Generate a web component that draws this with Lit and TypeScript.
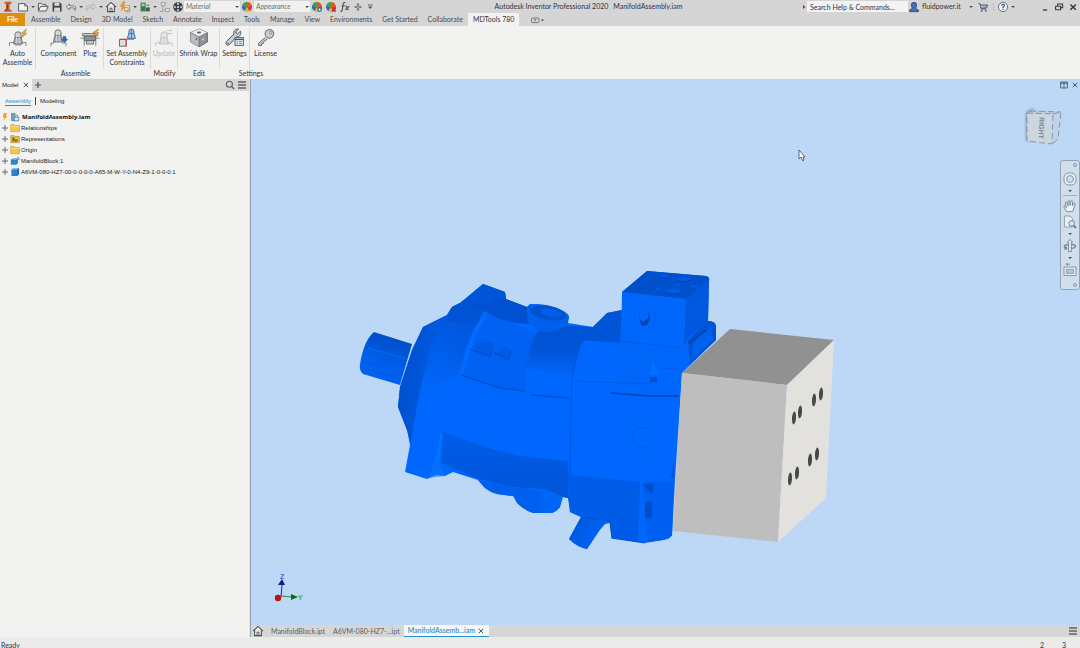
import { LitElement, html, css, svg, nothing, TemplateResult } from "lit";
import { customElement, property } from "lit/decorators.js";

/* Glyphs: [width, height, drawing] */
const plugShape = (x: number, y: number) => svg`<g transform="translate(${x} ${y})" stroke="#5d5f61" stroke-width=".8" stroke-linejoin="round">
  <path d="M3 3.2Q3.2 .8 6 .8Q8.8 .8 9 3.2V6.5H3Z" fill="#c9cbce"/>
  <path d="M3 6.5H9L10.4 11.5V13H1.6V11.5Z" fill="#a9acb0"/>
  <path d="M4.6 2V12.5M7.2 2V12.5" stroke="#e6e7e8" stroke-width=".7"/></g>`;
const wheel = svg`<circle cx="6" cy="6" r="4.9" fill="#e9b524"/>
  <path d="M6 6L1.4 4.2A4.9 4.9 0 0 1 6 1.1Z" fill="#3fa14c"/><path d="M6 6V1.1A4.9 4.9 0 0 1 10.7 4.6Z" fill="#e4572a"/>
  <path d="M6 6L10.7 4.6A4.9 4.9 0 0 1 8.6 10.2Z" fill="#d83a33"/><path d="M6 6L1.4 4.2A4.9 4.9 0 0 0 3.3 10.1Z" fill="#2f6fc1"/>`;
const wrench = svg`<path d="M17.4 3.2L14.6 5.8L13.2 5.2L12.9 3.8L15.6 1.2C13.6 .6 11.2 1.6 10.8 4.2Q10.7 5.2 11 6L3.4 13.6Q2 15.4 3.6 16.8Q5 18 6.6 16.4L13.6 8.6C16.4 9.4 18.6 6.2 17.4 3.2Z" fill="#c9ccd0" stroke="#54585d" stroke-width="1"/><circle cx="5" cy="15.2" r=".8" fill="#54585d"/>`;

const GLYPHS: Record<string, [number, number, TemplateResult]> = {
  logo: [10, 12, svg`<path d="M1.5 .8H8.5V2.6L6.6 3.4V8L8.8 9.6V10.8H1.2V9.6L3.4 8V3.4L1.5 2.6Z" fill="#c8622a"/><path d="M3.4 3.4H4.8V8.2L3.6 9.8H1.2L3.4 8Z" fill="#7a3613"/>`],
  new: [12, 12, svg`<path d="M1.6 2.6H7.6L10.4 5V10H1.6Z" fill="#f3f3f3" stroke="#5a5d60"/><path d="M7.6 2.6V5H10.4" fill="none" stroke="#5a5d60" stroke-width=".8"/>`],
  open: [12, 12, svg`<path d="M1.4 10V2.4H4.6L5.6 3.6H9V5.4" fill="#ececec" stroke="#5a5d60"/><path d="M1.4 10L3.6 5.4H11.2L9 10Z" fill="#f4f4f4" stroke="#5a5d60"/>`],
  save: [12, 12, svg`<path d="M1.6 1.6H9L10.6 3V10.6H1.6Z" fill="#3f4245"/><rect x="3.4" y="1.6" width="5" height="3.2" fill="#d9dadb"/><rect x="3.2" y="6.6" width="5.8" height="4" fill="#d9dadb"/>`],
  undo: [12, 12, svg`<path d="M4.4 3L1.4 5.8L4.4 8.6V6.8H8Q9.6 6.8 9.6 8.4V9.6Q11 8.6 10.8 7Q10.4 4.8 8 4.8H4.4Z" fill="#ededed" stroke="#5a5d60" stroke-width=".8"/>`],
  redo: [12, 12, svg`<path d="M7.6 3L10.6 5.8L7.6 8.6V6.8H4Q2.4 6.8 2.4 8.4V9.6Q1 8.6 1.2 7Q1.6 4.8 4 4.8H7.6Z" fill="#dcdcdc" stroke="#a9abad" stroke-width=".8"/>`],
  home: [12, 12, svg`<path d="M1 6.2L6 1.4L11 6.2M2.6 5.4V10.6H9.4V5.4" fill="#f1f1f1" stroke="#4d5053" stroke-width="1.1"/><path d="M5 10.4V7.2H7V10.4" fill="none" stroke="#4d5053" stroke-width=".9"/>`],
  bolt: [12, 12, svg`<path d="M4 .8L1.4 5.4H3.4L2.4 9.6L6.4 4.2H4.2L6 .8Z" fill="#f39a1f" stroke="#c97508" stroke-width=".4"/><path d="M5.4 6.6H9.2V9.6H5.4ZM8 4.6H10.6V10.8H6.6" fill="#ededed" stroke="#c4792c" stroke-width=".8"/>`],
  part: [12, 12, svg`<path d="M1.6 1.6H6.6V10.4H1.6Z" fill="#33804c"/><path d="M2.6 2.6H5.6V5.2H2.6Z" fill="#a9cfb3"/><path d="M6.8 6.4H10.8V10.4H6.8Z" fill="#4a5b50"/><path d="M8 3.6L9 5L10 3.6" stroke="#33804c" fill="none"/>`],
  tree: [12, 12, svg`<path d="M2.4 1.6H6V4.8H2.4ZM6.4 7.4H10.4V10.4H6.4ZM4 4.8V9H6.4" fill="#e9e9e9" stroke="#8a8d90" stroke-width=".8"/><path d="M1.4 10.4H4" stroke="#8a8d90"/>`],
  reel: [12, 12, svg`<circle cx="6" cy="6" r="4.8" fill="#3d4043"/><circle cx="6" cy="6" r="1.1" fill="#e4e4e4"/><g fill="#c9cacc"><circle cx="6" cy="2.9" r="1.1"/><circle cx="6" cy="9.1" r="1.1"/><circle cx="2.9" cy="6" r="1.1"/><circle cx="9.1" cy="6" r="1.1"/></g>`],
  wheel: [12, 12, wheel],
  wheelBlue: [12, 12, svg`${wheel}<circle cx="8.6" cy="8.6" r="2.3" fill="#2b62a8"/><path d="M8.6 7.2V10M7.2 8.6H10" stroke="#fff" stroke-width=".7"/>`],
  wheelRed: [12, 12, svg`${wheel}<path d="M7 7L10.6 10.6M10.6 7L7 10.6" stroke="#c92a2a" stroke-width="1.6"/>`],
  fx: [12, 12, svg`<path d="M6.4 1.6Q4.6 1 4.2 3.4L3.2 9Q2.8 10.8 1.4 10.4M2.6 5H5.8M6.4 5.2Q7.6 4.6 8 6.6Q8.4 9 9.8 8.4M10.4 5.2L6.2 8.8" fill="none" stroke="#4a4d50" stroke-width="1.1"/>`],
  plus: [12, 12, svg`<path d="M6 2.6V9.4M2.6 6H9.4" stroke="#6c6f72" stroke-width="2.2"/><path d="M6 3.4V8.6M3.4 6H8.6" stroke="#c5c6c7" stroke-width=".7"/>`],
  menu: [8, 12, svg`<path d="M2 4H6.6" stroke="#55585b" stroke-width=".9"/><path d="M2 5.6H6.6L4.3 8Z" fill="#55585b"/>`],
  caret: [6, 12, svg`<path d="M1.2 5H5L3.1 7.1Z" fill="#4d5053"/>`],
  play: [6, 12, svg`<path d="M2 4L4.4 6L2 8Z" fill="#45484b"/>`],
  user: [12, 12, svg`<path d="M3.4 4.2Q3.2 1.4 6 1.4Q8.8 1.4 8.6 4.2Q8.4 6.6 7.4 7.2L10.4 9V10.6H1.6V9L4.6 7.2Q3.6 6.6 3.4 4.2Z" fill="#4570b5" stroke="#1c3c74" stroke-width=".8"/>`],
  cart: [12, 12, svg`<path d="M1.4 2.6H3L4.2 8H9.4M3.4 4H10.6L9.6 7H4" fill="#9fb0c8" stroke="#44516a" stroke-width=".9"/><circle cx="4.8" cy="9.8" r=".9" fill="#44516a"/><circle cx="8.8" cy="9.8" r=".9" fill="#44516a"/>`],
  help: [12, 12, svg`<circle cx="6" cy="6" r="4.6" fill="#f3f5f8" stroke="#49535f" stroke-width=".8"/><path d="M4.6 4.8Q4.6 3.4 6 3.4Q7.5 3.4 7.4 4.7Q7.3 5.6 6 6.2V7.2M6 8V9" fill="none" stroke="#2c4b8c" stroke-width="1.1"/>`],
  min: [12, 12, svg`<path d="M3.8 9H8.2" stroke="#333" stroke-width="1.2"/>`],
  restore: [12, 12, svg`<path d="M4.6 5V3H9.6V6.6H8M2.6 5.2H7.6V8.8H2.6Z" fill="none" stroke="#3c3c3c" stroke-width="1.1"/>`],
  close: [12, 12, svg`<path d="M3.4 3.4L8.8 8.8M8.8 3.4L3.4 8.8" stroke="#333" stroke-width="1.4"/>`],
  x: [8, 8, svg`<path d="M1.8 1.8L6.2 6.2M6.2 1.8L1.8 6.2" stroke="#55585b" stroke-width="1"/>`],
  add: [8, 8, svg`<path d="M4 1V7M1 4H7" stroke="#4d4f52" stroke-width="1.2"/>`],
  search: [10, 10, svg`<circle cx="4.4" cy="4.2" r="3" fill="none" stroke="#5b5e61" stroke-width="1.1"/><path d="M6.6 6.4L9 9" stroke="#5b5e61" stroke-width="1.3"/>`],
  burger: [10, 10, svg`<path d="M1 2H9M1 5H9M1 8H9" stroke="#606366" stroke-width="1.4"/>`],
  tile: [10, 10, svg`<path d="M1.6 2H8.4V8H1.6ZM5 2V8M1.6 3.4H8.4" fill="none" stroke="#4d5a69" stroke-width=".9"/>`],
  panel: [16, 10, svg`<rect x="1.5" y="3" width="7.6" height="4.6" rx="1.4" fill="none" stroke="#5b5e61" stroke-width=".8"/><path d="M4 4.6H6.6L5.3 6Z" fill="#45484b"/><path d="M11 4.6H14L12.5 6.4Z" fill="#45484b"/>`],

  autoAssemble: [24, 20, svg`${plugShape(6, 3)}<path d="M3.5 18V14.6H7.6M20 18V14.6H16.6M9 17H15" fill="none" stroke="#6b6e71" stroke-width=".8"/><path d="M20.6 1L15.4 5.4L17.8 6L15 10L20.8 5.4L18.6 4.8Z" fill="#f5b73b" stroke="#a46d12" stroke-width=".6"/>`],
  component: [24, 20, svg`${plugShape(5, 1)}<path d="M4 18.4V15H7.4M19 18.4V15H15" fill="none" stroke="#6b6e71" stroke-width=".8"/><path d="M16 8.4H19V11.2H20.8L17.5 14.8L14.2 11.2H16Z" fill="#2a6db3" stroke="#1a4e88" stroke-width=".4"/>`],
  plug: [24, 20, svg`<path d="M4.6 5.6H19.4V8H4.6Z" fill="#d6d8da" stroke="#55585b" stroke-width=".8"/><path d="M6.4 8H17.6V12.6H6.4Z" fill="#8e9297" stroke="#55585b" stroke-width=".8"/><path d="M8.4 12.6H15.6V16H8.4Z" fill="#c7c9cc" stroke="#55585b" stroke-width=".8"/><path d="M2.4 10.2H6.2V17.8M21.6 10.2H17.8V17.8" fill="none" stroke="#6b6e71" stroke-width=".8"/><path d="M20.8 1L15 4.4L17.4 5L15 8.4L20.8 4.8L18.6 4.2Z" fill="#f5b73b" stroke="#a46d12" stroke-width=".6"/>`],
  constraints: [24, 20, svg`<path d="M4.5 11.5H11.2V18.2H4.5Z" fill="#dcdfe2" stroke="#5d6064" stroke-width=".9"/><path d="M4.5 11.2H11.2V18.4M11.2 11.2H19" fill="none" stroke="#d03a32" stroke-width=".9"/><path d="M13.8 3.6Q14 1 16.4 1Q18.8 1 19 3.6V5.6L20.4 10.4H12.4L13.8 5.6Z" fill="#a9cbe8" stroke="#2e6596" stroke-width=".9"/><path d="M13.8 5.6H19M16.4 1.4V10" stroke="#2e6596" stroke-width=".8"/>`],
  update: [24, 20, svg`<g opacity=".38">${plugShape(6, 3)}<path d="M3.5 18V15H7.6M20 18V15H16.6M14.4 2.6H20L18.4 1M20.6 5.4H15L16.6 7" fill="none" stroke="#6b6e71" stroke-width=".9"/></g>`],
  shrink: [24, 20, svg`<path d="M12 1L20.4 4.6V14L12 18.8L3.6 14V4.6Z" fill="#8e939a" stroke="#54585e" stroke-width=".8"/><path d="M12 1L20.4 4.6L12 9L3.6 4.6Z" fill="#e9eaec"/><path d="M3.6 4.6L12 9V18.8L3.6 14Z" fill="#b9bdc3"/><path d="M3.6 4.6L12 9L20.4 4.6M12 9V18.8" fill="none" stroke="#54585e" stroke-width=".6"/><ellipse cx="12" cy="4.6" rx="2" ry="1" fill="#5a5e64"/><circle cx="9.4" cy="11" r=".9" fill="#5a5e64"/><circle cx="16" cy="11.4" r="1" fill="#d7d9dc"/>`],
  settings: [24, 20, svg`${wrench}<rect x="12" y="9.6" width="8.4" height="7.8" fill="#e8f1f8" stroke="#2f5d80" stroke-width=".9"/><path d="M12 11.4H20.4" stroke="#2f5d80" stroke-width="1.4"/><path d="M13.6 13.6H15M16 13.6H19M13.6 15.6H15M16 15.6H19" stroke="#2f5d80" stroke-width=".7"/>`],
  license: [24, 20, svg`<path d="M11.4 9.4L4.6 15.2V17.6L7.4 17.4L7.6 15.8L9.2 15.6L9.4 14L13.4 11" fill="#c2c5c9" stroke="#5b5e62" stroke-width=".9"/><path d="M11 5.4Q11.4 1.8 15.4 1.4Q19.8 1.8 19.8 5.8Q19.4 9.6 15.8 10.4Q11.4 10.2 11 5.4Z" fill="#c9ccd0" stroke="#5b5e62" stroke-width=".9"/><circle cx="16.6" cy="4.6" r="1.2" fill="#f4f4f4" stroke="#5b5e62" stroke-width=".7"/>`],

  assembly: [10, 10, svg`<path d="M1.6 1.6H5V8.6H1.6Z" fill="#7fa6c7" stroke="#3d6c93" stroke-width=".7"/><path d="M4.2 5.2H8.8V8.8H4.2Z" fill="#dde9f2" stroke="#3d6c93" stroke-width=".7"/><path d="M5.6 3H7.4V5" fill="none" stroke="#3d6c93" stroke-width=".7"/>`],
  spark: [6, 10, svg`<path d="M1.6 1H5L4 4H5.2L1.6 9L2.4 5.4H1Z" fill="#f49b22"/>`],
  folder: [10, 10, svg`<path d="M.8 1.6H4L5 2.6H9.4V8.6H.8Z" fill="#f3c650" stroke="#d49f27" stroke-width=".7"/><path d="M1.2 3.6H9" stroke="#fbe39c" stroke-width=".8"/>`],
  folderRep: [10, 10, svg`<path d="M.8 1.6H4L5 2.6H9.4V8.6H.8Z" fill="#e9bb45" stroke="#c09022" stroke-width=".7"/><path d="M2.4 3.4H4.6V7.6H2.4ZM5 5.4H7.6V7.6H5Z" fill="#6b6238"/>`],
  blockAsm: [10, 10, svg`<path d="M.8 3.6L3 2.4H8V7L6.4 8.8H.8Z" fill="#2f87c9"/><path d="M.8 3.6L3 2.4H8L6.2 3.8Z" fill="#83bde6"/><path d="M7.2 1L9.4 2.6L8.4 4" fill="none" stroke="#555" stroke-width=".8"/>`],
  block: [10, 10, svg`<path d="M1.4 2.6L3.4 1.2H9V7L7.4 9H1.4Z" fill="#2b7fd0"/><path d="M1.4 2.6L3.4 1.2H9L7.4 2.6Z" fill="#8cc3ee"/><path d="M7.4 2.6L9 1.2V7L7.4 9Z" fill="#1a5fa8"/>`],
  expand: [6, 8, svg`<path d="M3 1V7M0 4H6" stroke="#66686a" stroke-width="1"/>`],

  navWheel: [16, 16, svg`<rect x="2" y="2" width="12" height="12" rx="4.6" fill="#e4ecf3" stroke="#8795a1"/><circle cx="8" cy="8" r="3.4" fill="#d3e0eb" stroke="#8795a1"/>`],
  hand: [16, 16, svg`<path d="M4.6 13.6L2 9Q1.4 7.6 2.8 7.8L4.4 9.6L3.4 4.8Q3.6 3.4 4.8 4.4L6 7.8L6 2.8Q6.6 1.6 7.6 2.8L8 7.4L9.2 3Q10.2 2 10.8 3.4L10.2 8L12 5.2Q13.2 4.6 13.2 6L11.6 11L10.6 13.6Z" fill="#eef3f7" stroke="#76838f" stroke-width=".9"/>`],
  zoom: [16, 16, svg`<path d="M2.4 2H8L10.6 4.6V13H2.4Z" fill="#e9eff5" stroke="#8795a1" stroke-width=".9"/><circle cx="9.6" cy="9.4" r="2.8" fill="#d9e6f1" stroke="#76838f"/><path d="M11.8 11.6L14 14" stroke="#5f6c78" stroke-width="1.6"/>`],
  orbit: [16, 16, svg`<path d="M4.4 10.4Q1 9 3 7.2Q8 5.4 13 7.2Q15 8.8 11 10.2L8.8 10.4M4 8.6L4.8 10.6L2.4 11.4" fill="none" stroke="#76838f" stroke-width="1.3"/><path d="M6.6 13.6V4.4H5.4L8 1.4L10.6 4.4H9.4V13.6Z" fill="#e6edf3" stroke="#76838f" stroke-width=".9"/>`],
  lookAt: [16, 16, svg`<path d="M2 5H14V13.6H2Z" fill="#e4ecf3" stroke="#8795a1"/><path d="M4.4 7.4H11.6V11.4H4.4Z" fill="#b7c3ce" stroke="#8795a1" stroke-width=".8"/><path d="M8 2.2H4L5.4 1M4 2.2L5.4 3.6" fill="none" stroke="#76838f" stroke-width=".9"/>`],
};

@customElement("ui-icon")
class UiIcon extends LitElement {
  @property() name = "";
  static styles = css`
    :host { display: inline-flex; flex: none; }
    svg { display: block; }
  `;
  render() {
    const g = GLYPHS[this.name];
    return g ? html`<svg width=${g[0]} height=${g[1]} viewBox="0 0 ${g[0]} ${g[1]}" aria-hidden="true">${g[2]}</svg>` : nothing;
  }
}

/* The 3D scene: pump in blue, manifold block in grey */
@customElement("model-scene")
class ModelScene extends LitElement {
  static styles = css`
    :host { display: block; min-height: 0; }
    svg { display: block; width: 100%; height: 100%; }
    .axis { font: 700 7px "Liberation Sans", sans-serif; }
  `;
  render() {
    const holes = [[794, 418], [800, 412], [814, 400], [821, 394], [790, 479], [797, 473], [810, 460], [817, 454]];
    return html`<svg viewBox="251 79 829 546" role="img" aria-label="Pump mounted on manifold block">
      <defs>
        <linearGradient id="shaft" x1="0" y1="0" x2="-.3" y2="1"><stop offset="0" stop-color="#0050cc"/><stop offset=".45" stop-color="#0060ee"/><stop offset="1" stop-color="#0062f2"/></linearGradient>
        <linearGradient id="flange" x1="0" y1="0" x2="1" y2=".3"><stop offset="0" stop-color="#004ec8"/><stop offset="1" stop-color="#005de6"/></linearGradient>
        <linearGradient id="barrel" x1="0" y1="0" x2="0" y2="1"><stop offset="0" stop-color="#0052d2"/><stop offset=".5" stop-color="#0054d6"/><stop offset="1" stop-color="#0065fa"/></linearGradient>
        <linearGradient id="under" x1="0" y1="0" x2="0" y2="1"><stop offset="0" stop-color="#005de9"/><stop offset="1" stop-color="#0054d6"/></linearGradient>
        <linearGradient id="pipe" x1="0" y1="0" x2="1" y2=".5"><stop offset="0" stop-color="#0055d8"/><stop offset="1" stop-color="#0066fb"/></linearGradient>
        <linearGradient id="cover" x1="0" y1="0" x2="-.3" y2="1"><stop offset="0" stop-color="#0057dc"/><stop offset="1" stop-color="#0067fe"/></linearGradient>
      </defs>
      <path fill="url(#shaft)" d="M374 332L412 344L400 385L363 374Q359 371 360 364Q364 340 374 332Z"/>
      <path stroke="#0074ff" stroke-width=".8" fill="none" d="M368 348L407 359"/>
      <path stroke="#0056d8" stroke-width=".8" fill="none" d="M362 361L402 373M363 368L400 379"/>
      <path fill="#0067fe" d="M398 407L400 387L412 350L423 327L447 315L452 307L460 303L465 299L483 284L505 292L506 299L527 307L530 304Q545 304 556 308Q567 312 569 316L568 323L593 327L600 320L607 313L622 310V292L647 271L706 276Q710 277 709 281L708 321Q716 321 716 327V340L682 373L675 480L672 535Q670 539 663 540L645 543L612 538L610 523L605 524L599 531L587 549Q577 547 569 539L581 517L570 512L568 498L563 497L560 507Q556 512 552 513H533Q524 510 517 503L513 496L497 494Q490 492 485 488L478 480L453 472L445 476L436 475L427 479L405 472L410 445L407 430Z"/>
      <path fill="url(#flange)" d="M398 407L400 387L412 350L423 327L447 315L442 325Q430 350 424 375Q416 405 411 444L407 430Z"/>
      <path fill="url(#cover)" d="M447 315L452 307L460 303L484 312Q470 328 459 374L424 390Q424 350 447 315Z"/>
      <path fill="#0053d4" d="M452 307L460 303L484 311L477 325Q462 324 447 321Z"/>
      <path fill="#0051cf" d="M460 303L465 299L483 284L505 292L506 299L527 307L528 319L538 324Q505 325 484 311Z"/>
      <path fill="#005be6" d="M483 284L505 292L506 299L497 297L489 304L463 303Z" opacity=".4"/>
      <path fill="#0060ec" d="M527 307Q530 303 546 305Q565 309 569 317L567 327Q553 334 538 331L528 322Z"/>
      <ellipse cx="548" cy="313" rx="18" ry="7" transform="rotate(10 548 313)" fill="#0051cf"/>
      <ellipse cx="551" cy="313" rx="11" ry="4" transform="rotate(12 551 313)" fill="#005de8"/>
      <path fill="url(#barrel)" d="M538 331Q553 334 567 326L593 327L600 320L581 345L573 375L525 368Q527 345 538 331Z"/>
      <path fill="#0070ff" opacity=".5" d="M484 311Q472 330 460 374L463 375Q476 330 488 312Z"/>
      <path fill="#0060ed" d="M488 314L536 333L526 369L524 391L505 389L463 374Q472 340 488 314Z" opacity=".7"/>
      <path fill="none" stroke="#004ec8" stroke-width="1.6" d="M470 349L490 356L493 344M495 353L508 359L511 351"/>
      <path fill="#005be4" d="M472 347L483 340L494 343L490 355ZM496 352L505 347L511 351L508 359Z"/>
      <path fill="none" stroke="#0050cc" stroke-width="1.5" d="M461 375L500 388L525 391M531 395L570 398"/>
      <path fill="none" stroke="#0054d6" stroke-width="1" d="M580 342L572 375L569 500"/>
      <path fill="#0054d6" d="M581 342L593 327L607 313L622 310L620 343L581 340Z"/>
      <path fill="#0061f1" d="M620 341L688 348L680 364L676 368L655 366L652 392L620 392Z" opacity=".35"/>
      <path fill="#004fcb" d="M622 292L647 271L706 276Q710 277 709 281L686 299Z"/>
      <path fill="#0067fd" d="M622 293L686 299L683 348L621 341Z"/>
      <path fill="#0058de" d="M686 299L709 279L708 321L688 338L684 347Z"/>
      <g fill="#005be6"><ellipse cx="664" cy="276" rx="4" ry="1.5"/><ellipse cx="684" cy="279" rx="6" ry="2"/><ellipse cx="694" cy="286" rx="4" ry="1.5"/><ellipse cx="673" cy="291" rx="8" ry="2.5"/><ellipse cx="658" cy="289" rx="2" ry="1.5"/><ellipse cx="678" cy="285" rx="3" ry="1"/></g>
      <g fill="none" stroke="#003fa8" stroke-width=".8"><path d="M666 293Q674 296 682 292M678 281Q685 283 691 280M660 278H668"/></g>
      <path fill="#0045b5" d="M639 319L643 322L648 318L649 310L650 319L647 325L642 326Z"/>
      <ellipse cx="645" cy="317" rx="11" ry="14" fill="none" stroke="#0060ee" stroke-width=".8"/>
      <path fill="#0053d2" d="M688 340L708 321Q716 321 716 327V340L690 364Z"/>
      <path fill="#0065f8" d="M693 343L711 327L713 340L692 360Z" opacity=".7"/>
      <path stroke="#0044b4" stroke-width="1.6" fill="none" d="M689 343L706 330M611 393L650 396L679 396"/>
      <path stroke="#005ce6" stroke-width="1" fill="none" d="M621 341L683 348M575 381L650 384M656 368L679 369"/>
      <path fill="#0050cc" d="M650 377H657V382H650Z"/><path fill="#0070ff" d="M653 361L657 368V375H649Z"/>
      <path fill="url(#under)" d="M443 432L495 450L520 456L568 461V498L563 497L545 489L513 487L480 479L441 463Z"/>
      <path fill="#0b78ff" d="M440 433L443 434L439 463L445 476L428 478Q438 455 440 433Z" opacity=".6"/>
      <path fill="#0060ee" d="M478 480L513 487V496L497 494Q490 492 485 488ZM513 488Q535 488 560 497V507Q556 512 552 513H533Q524 510 517 503Z"/>
      <path fill="#0068fb" d="M540 491L562 497L560 507Q556 512 552 513H540Z" opacity=".5"/>
      <path fill="#005ce6" d="M568 475L640 482L638 542L612 538L610 523L581 517L570 512Z"/>
      <path fill="url(#pipe)" d="M581 517L609 521L605 524Q600 528 599 531L587 549Q577 547 569 539Z"/>
      <path fill="none" stroke="#0051cd" stroke-width="1.2" d="M582 517L610 521L612 538L645 543"/>
      <path fill="#005ff0" d="M642 482H674L672 535Q670 539 663 540L648 542Z"/>
      <path fill="#004ec8" d="M643 484L650 493H653V484M645 504Q653 496 652 508V518H645Z"/><path fill="#0051d0" d="M674 462L671 478H674Z"/>
      <path fill="none" stroke="#005ce8" d="M643 428A10 10 0 1 0 652 440M639 428H647M641 438L646 441"/>

      <path fill="#919191" d="M682 373L730 329L834 340L787 385Z"/>
      <path fill="#bebebe" d="M682 373L787 385L778 542L673 531Z"/>
      <path fill="#e3e1de" d="M787 385L834 340L826 498L778 542Z"/>
      <g fill="#484848">${holes.map(([x, y]) => svg`<ellipse cx=${x} cy=${y} rx="2" ry="6.4" transform="rotate(4 ${x} ${y})"/>`)}</g>

      <path d="M281 597L282 585" stroke="#22228c" stroke-width="1"/><path d="M278 585L282 579L285 585Z" fill="#16168f"/>
      <path d="M281 596L292 597" stroke="#2f7f58" stroke-width="1"/><path d="M291 594L298 597L291 600Z" fill="#087008"/>
      <circle cx="278" cy="598" r="3.2" fill="#b81212"/>
      <text class="axis" x="280" y="579" fill="#5b5bd2">Z</text><text class="axis" x="298" y="600" fill="#38b24e">Y</text>
      <path d="M799 150V159L801 157L803 161L804 160L803 157H805Z" fill="#fff" stroke="#3a4554" stroke-width=".8"/>
    </svg>`;
  }
}

@customElement("view-cube")
class ViewCube extends LitElement {
  static styles = css`
    :host { display: block; }
    svg { display: block; }
    .face { font: 700 7px "Liberation Sans", sans-serif; }
  `;
  render() {
    return html`<svg width="42" height="44" viewBox="0 0 42 44" role="img" aria-label="View cube">
      <defs><filter id="soft" x="-1" y="-.3" width="3" height="1.6"><feGaussianBlur stdDeviation="1.8"/></filter></defs>
      <path d="M4 7L12 3L10 36L4 35Z" fill="#6f87a3" opacity=".8" filter="url(#soft)"/>
      <path d="M5 8L31 9L30 39L5 36Z" fill="#cbd6e1"/><path d="M31 9L39 8L36 33L30 39Z" fill="#c0d3e8"/><path d="M5 8L12 5L39 7L31 9Z" fill="#bccbdc"/>
      <path d="M5 8L31 9L30 39L5 36ZM31 9L39 7L36 34L30 39M8 6L39 7" fill="none" stroke="#75879a" stroke-dasharray="6 3" stroke-width=".8"/>
      <text class="face" x="-11" y="0" transform="translate(17 23) rotate(92)" fill="#7b8794">RIGHT</text>
    </svg>`;
  }
}

@customElement("app-root")
class AppRoot extends LitElement {
  static styles = css`
    :host { display: flex; flex-direction: column; height: 100vh; overflow: hidden; background: #f2f2f1; color: #333436; font: 7px/9px Lato, "Liberation Sans", sans-serif; }
    * { box-sizing: border-box; }
    button, select, input { font: inherit; color: inherit; border: 0; padding: 0; margin: 0; background: none; border-radius: 0; }
    button { display: flex; align-items: center; justify-content: center; white-space: nowrap; }

    .titlebar { display: flex; align-items: center; height: 13px; flex: none; background: #d5d5d5; }
    .group { display: flex; align-items: center; flex: none; }
    .cell { width: 14px; height: 12px; }
    .logo { width: 16px; }
    .narrow { width: 6px; height: 12px; }
    .wide { width: 12px; height: 12px; }
    .combo { position: relative; display: flex; width: 56px; height: 11px; background: #f0f0f0; }
    .combo select { flex: 1; width: 100%; appearance: none; padding: 0 2px; font-style: italic; color: #6f7072; }
    .combo ui-icon { position: absolute; right: 0; top: 0; pointer-events: none; }
    .title { flex: 1; display: flex; justify-content: center; gap: 5px; margin: 0; font: inherit; white-space: nowrap; }
    .query { width: 101px; height: 11px; padding: 0 3px; background: #f3f3f3; }
    .query::placeholder { color: #333436; opacity: 1; }
    .account { display: flex; align-items: center; gap: 2px; width: 60px; justify-content: flex-start; }
    .split { width: 1px; height: 8px; margin: 0 2px 0 3px; background: #bdbdbd; }
    .store { margin-left: 2px; }
    .window { margin-left: 23px; gap: 2px; padding-right: 1px; }

    .tabs { display: flex; height: 13px; flex: none; background: #d5d5d5; }
    .tabs button { padding: 0 5px; color: #4a4c4e; }
    .tabs .file { width: 25px; padding: 0; margin-right: 1px; background: #e08e0b; color: #fff; font-weight: 700; }
    .tabs .active { background: #f2f2f1; color: #333436; }
    .tabs .toggle { margin-left: 6px; }

    .ribbon { display: flex; height: 53px; flex: none; background: #f2f2f1; }
    .panel { display: flex; flex-direction: column; padding-top: 2px; }
    .tools { display: flex; height: 41px; }
    .tools button { flex-direction: column; justify-content: flex-start; gap: 1px; height: 41px; line-height: 9px; border-right: 1px solid transparent; }
    .tools .end { border-right-color: #d9d9d8; }
    .tools .off { color: #b9babb; }
    .tools .w36 { width: 36px; }
    .tools .w46 { width: 46px; }
    .tools .w22 { width: 22px; padding-right: 5px; }
    .tools .w47 { width: 47px; }
    .tools .w27 { width: 27px; }
    .tools .w42 { width: 42px; }
    .tools .w30 { width: 30px; }
    .tools .w32 { width: 32px; }
    .caption { text-align: center; line-height: 9px; }

    .main { display: flex; flex: 1; min-height: 0; }
    .browser { width: 250px; flex: none; display: flex; flex-direction: column; font: 6px/8px "Liberation Sans", sans-serif; color: #222; border-right: 1px solid #e4e4e4; }
    .strip { display: flex; align-items: center; height: 12px; background: #d6d6d5; }
    .strip .tab { gap: 4px; height: 12px; padding: 0 2px; background: #f2f2f1; }
    .strip .add { padding: 0 2px; }
    .strip .push { margin-left: auto; }
    .strip .last { padding: 0 2px; }
    .modes { display: flex; align-items: center; gap: 4px; padding: 5px 5px 4px; }
    .modes button { height: 10px; border-bottom: 1px solid transparent; }
    .modes .on { color: #1f8fc4; border-bottom-color: #1f8fc4; }
    .modes .bar { width: 1px; height: 8px; background: #444; }
    .tree { list-style: none; margin: 0; padding: 1px 2px; }
    .tree li { display: flex; align-items: center; gap: 2px; height: 11px; white-space: nowrap; }
    .tree .root { font: 700 6px/8px "Open Sans", sans-serif; color: #111; }
    .tree .name { margin-left: -1px; }
    .tree .knob { width: 6px; height: 8px; }

    .stage { flex: 1; min-width: 0; display: flex; flex-direction: column; border-left: 1px solid #9aa3ad; }
    .canvas { position: relative; flex: 1; min-height: 0; display: flex; background: #bdd8f6; }
    .canvas model-scene { flex: 1; }
    .corner { position: absolute; top: 1px; right: 1px; display: flex; gap: 2px; }
    .canvas view-cube { position: absolute; top: 26px; right: 16px; }
    .nav { position: absolute; top: 81px; right: 0; width: 20px; height: 130px; display: flex; flex-direction: column; align-items: center; padding: 1px 0; background: #cfdfee; border: 1px solid #93a3b2; border-radius: 3px; }
    .nav .pin { align-self: flex-end; width: 4px; height: 4px; margin: 1px 2px 4px; border: 1px solid #8b99a6; border-radius: 50%; }
    .nav .low { margin: auto 2px 1px; }
    .nav .rule { width: 14px; height: 1px; margin-bottom: 2px; background: #a3b1be; }
    .nav .drop { width: 6px; height: 8px; }
    .docs { display: flex; align-items: center; height: 12px; flex: none; background: #d6d6d6; color: #5c5e61; }
    .docs button { height: 12px; padding: 0 4px; }
    .docs .house { padding: 0 3px 0 1px; width: 16px; }
    .docs .active { gap: 2px; background: #f4f6f7; color: #1d7db3; border-bottom: 1px solid #2492cb; }
    .docs .more { margin-left: auto; padding: 0 2px; }
    .status { display: flex; align-items: flex-start; height: 11px; flex: none; padding: 4px 14px 0 1px; background: #ebebeb; overflow: hidden; line-height: 8px; }
    .status .count { margin-left: auto; }
    .status .count + .count { margin-left: 18px; }
  `;

  private iconButton(name: string, label: string, cls = "cell") {
    return html`<button class=${cls} aria-label=${label}><ui-icon name=${name}></ui-icon></button>`;
  }

  private tool(icon: string, lines: string[], cls: string) {
    return html`<button class=${cls}><ui-icon name=${icon}></ui-icon><span>${lines.map((l, i) => html`${i ? html`<br />` : nothing}${l}`)}</span></button>`;
  }

  render() {
    const b = (n: string, l: string, c?: string) => this.iconButton(n, l, c);
    const tabs = ["Assemble", "Design", "3D Model", "Sketch", "Annotate", "Inspect", "Tools", "Manage", "View", "Environments", "Get Started", "Collaborate"];
    const nodes = [["folder", "Relationships"], ["folderRep", "Representations"], ["folder", "Origin"], ["blockAsm", "ManifoldBlock:1"], ["block", "A6VM-080-HZ7-00-0-0-0-0-A65-M-W-Y-0-N4-Z9-1-0-0-0:1"]];
    return html`
      <header class="titlebar">
        <div class="group">
          ${b("logo", "Application menu", "cell logo")}${b("new", "New")}${b("caret", "New options", "narrow")}${b("open", "Open")}${b("save", "Save")}
          ${b("undo", "Undo")}${b("caret", "Undo history", "narrow")}${b("redo", "Redo")}${b("caret", "Redo history", "narrow")}
          ${b("home", "Home")}${b("bolt", "Update")}${b("caret", "Update options", "narrow")}${b("part", "Select")}${b("caret", "Select options", "narrow")}
          ${b("tree", "Properties")}${b("reel", "Material browser", "wide")}
          <div class="combo"><select aria-label="Material"><option>Material</option></select><ui-icon name="caret"></ui-icon></div>
          ${b("wheel", "Appearance browser")}
          <div class="combo"><select aria-label="Appearance"><option>Appearance</option></select><ui-icon name="caret"></ui-icon></div>
          ${b("wheelBlue", "Adjust appearance")}${b("wheelRed", "Clear appearance")}${b("fx", "Parameters")}${b("plus", "Measure", "wide")}${b("menu", "Customize", "wide")}
        </div>
        <h1 class="title"><span>Autodesk Inventor Professional 2020</span><span>ManifoldAssembly.iam</span></h1>
        <div class="group">
          ${b("play", "Expand search", "narrow")}
          <input class="query" type="search" aria-label="Search help and commands" placeholder="Search Help &amp; Commands..." />
          <button class="account"><ui-icon name="user"></ui-icon>fluidpower.it</button>
          ${b("caret", "Account options", "narrow")}${b("cart", "App store", "cell store")}<span class="split"></span>${b("help", "Help")}${b("caret", "Help options", "narrow")}
          <div class="group window">${b("min", "Minimize", "wide")}${b("restore", "Restore", "wide")}${b("close", "Close", "wide")}</div>
        </div>
      </header>
      <nav class="tabs">
        <button class="file">File</button>
        ${tabs.map((t) => html`<button>${t}</button>`)}
        <button class="active">MDTools 780</button>
        <button class="toggle" aria-label="Ribbon display"><ui-icon name="panel"></ui-icon></button>
      </nav>
      <section class="ribbon">
        <div class="panel">
          <div class="tools">
            ${this.tool("autoAssemble", ["Auto", "Assemble"], "end w36")}
            ${this.tool("component", ["Component"], "w46")}${this.tool("plug", ["Plug"], "end w22")}
            ${this.tool("constraints", ["Set Assembly", "Constraints"], "end w47")}
          </div>
          <div class="caption">Assemble</div>
        </div>
        <div class="panel"><div class="tools">${this.tool("update", ["Update"], "end off w27")}</div><div class="caption">Modify</div></div>
        <div class="panel"><div class="tools">${this.tool("shrink", ["Shrink Wrap"], "end w42")}</div><div class="caption">Edit</div></div>
        <div class="panel"><div class="tools">${this.tool("settings", ["Settings"], "end w30")}${this.tool("license", ["License"], "w32")}</div><div class="caption">Settings</div></div>
      </section>
      <main class="main">
        <aside class="browser">
          <div class="strip">
            <button class="tab">Model<ui-icon name="x"></ui-icon></button>
            ${b("add", "Add browser", "add")}${b("search", "Search browser", "push")}${b("burger", "Browser menu", "last")}
          </div>
          <div class="modes"><button class="on">Assembly</button><span class="bar"></span><button>Modeling</button></div>
          <ul class="tree">
            <li class="root"><ui-icon name="spark"></ui-icon><ui-icon name="assembly"></ui-icon>ManifoldAssembly.iam</li>
            ${nodes.map(([i, t]) => html`<li><button class="knob" aria-label="Expand ${t}"><ui-icon name="expand"></ui-icon></button><ui-icon name=${i}></ui-icon><span class="name">${t}</span></li>`)}
          </ul>
        </aside>
        <section class="stage">
          <div class="canvas">
            <model-scene></model-scene>
            <div class="corner">${b("tile", "Tile windows", "")}${b("x", "Close view", "")}</div>
            <view-cube></view-cube>
            <div class="nav">
              <span class="pin"></span>${b("navWheel", "Steering wheel", "")}${b("caret", "Wheel options", "drop")}<span class="rule"></span>
              ${b("hand", "Pan", "")}${b("zoom", "Zoom", "")}${b("caret", "Zoom options", "drop")}
              ${b("orbit", "Orbit", "")}${b("caret", "Orbit options", "drop")}${b("lookAt", "Look at", "")}<span class="pin low"></span>
            </div>
          </div>
          <div class="docs">
            ${b("home", "Home", "house")}<button>ManifoldBlock.ipt</button><button>A6VM-080-HZ7-...ipt</button>
            <button class="active">ManifoldAssemb...iam<ui-icon name="x"></ui-icon></button>
            ${b("burger", "Document list", "more")}
          </div>
        </section>
      </main>
      <footer class="status"><span>Ready</span><span class="count">2</span><span class="count">3</span></footer>
    `;
  }
}
